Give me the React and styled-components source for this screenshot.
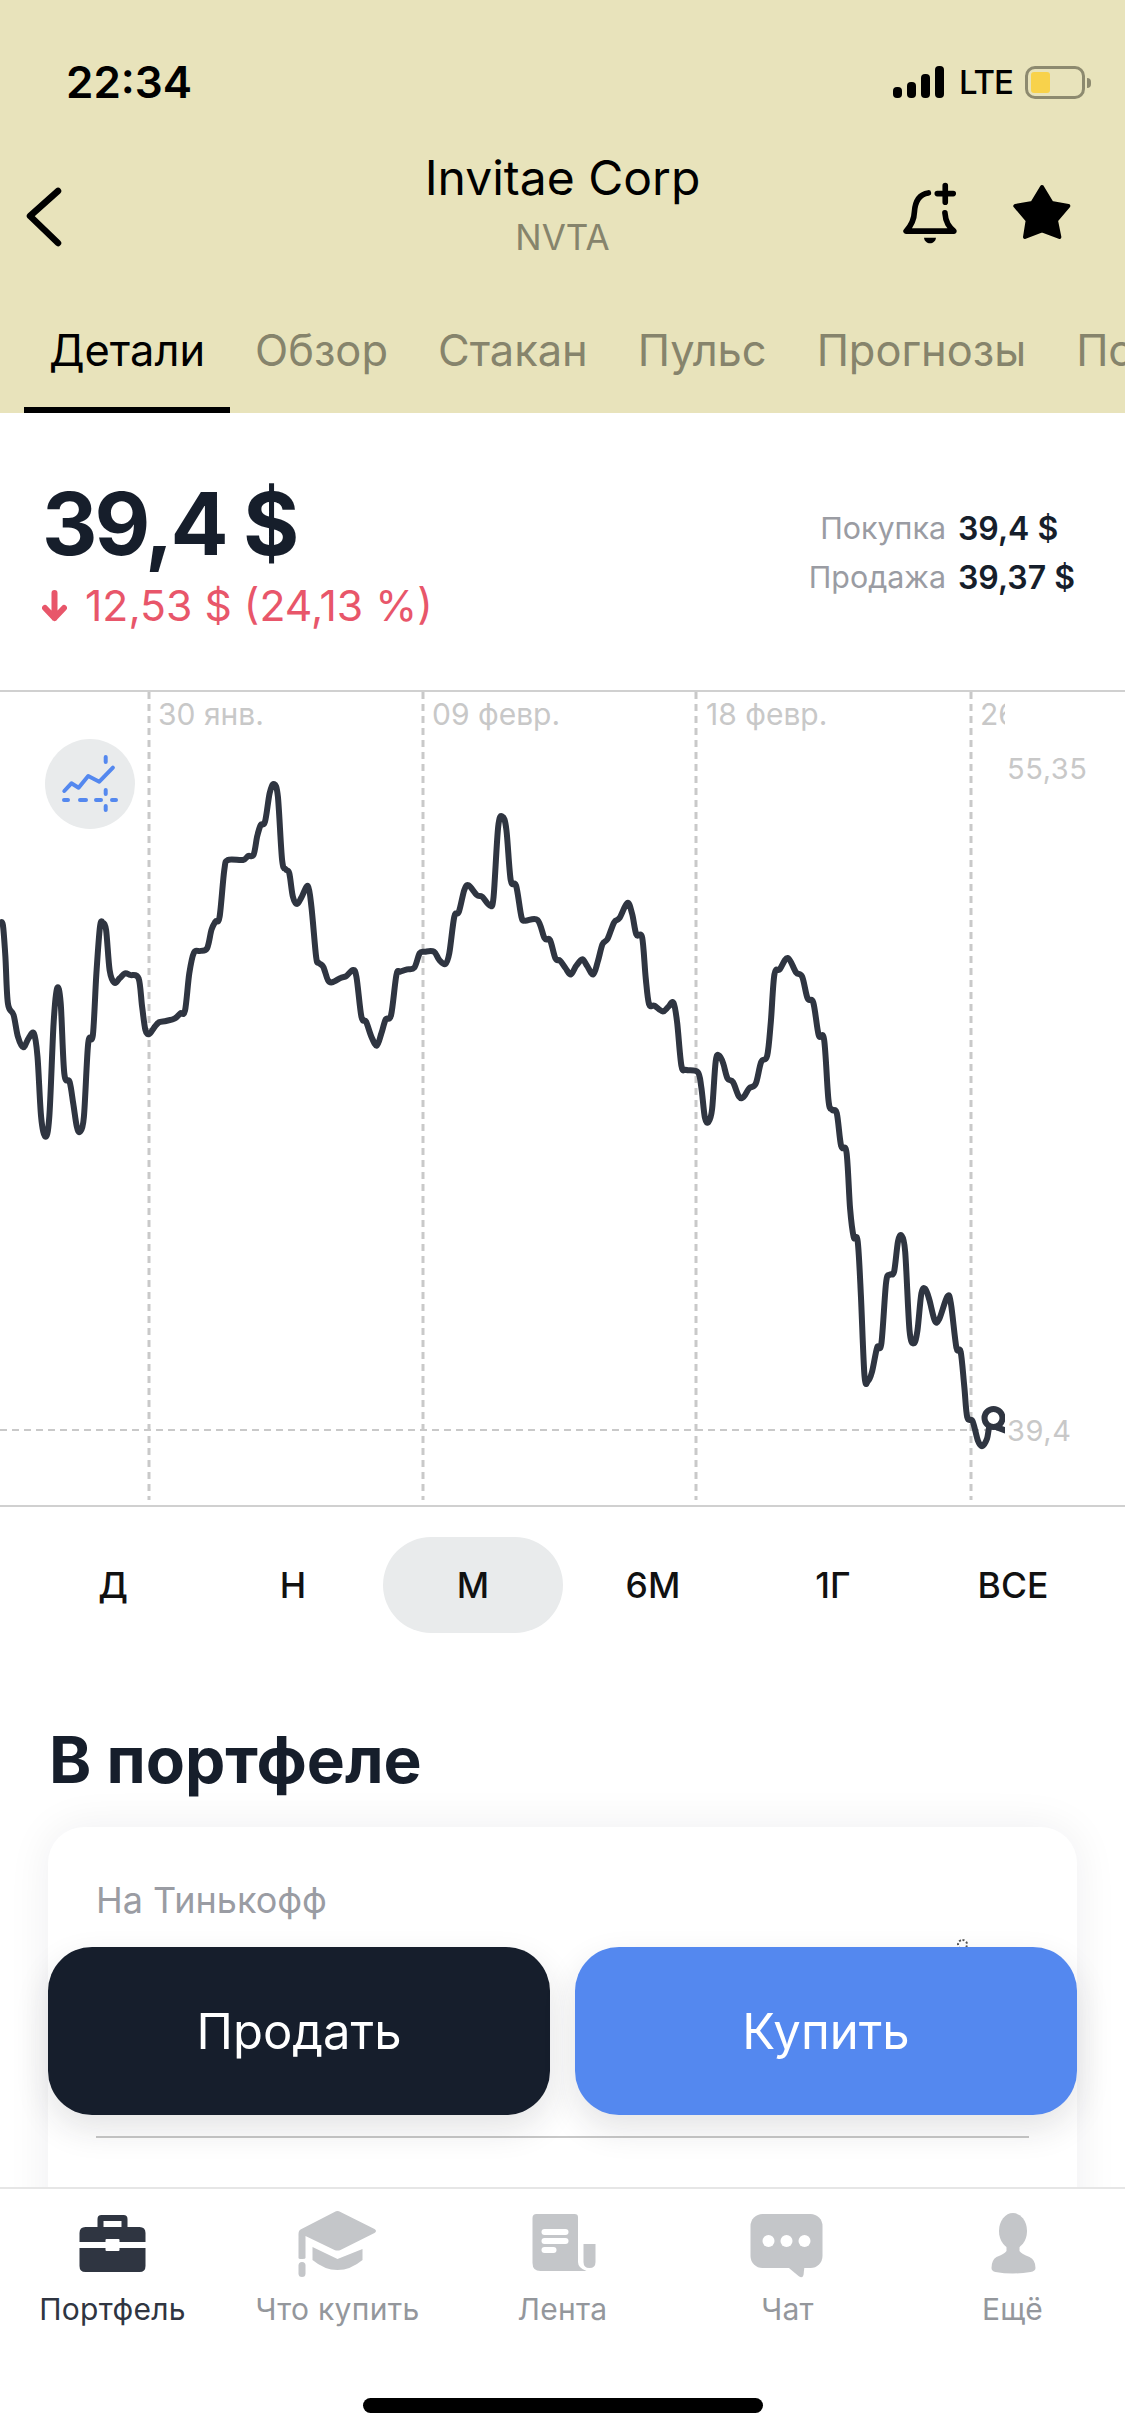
import React from "react";
import styled, { createGlobalStyle } from "styled-components";

const FONT = `Inter, "Noto Sans", "Liberation Sans", sans-serif`;
const INK = "#161e2b";
const SLATE = "#2f3541";
const MUTED = "#9a9ca3";
const ICON_GREY = "#c4c6c9";
const BLUE = "#5488ef";

const GlobalStyle = createGlobalStyle`
  html, body { margin: 0; padding: 0; background: #fff; }
  body { font-family: ${FONT}; }
`;

// traced from zoomed crops of the chart, crop coords -> page coords below
const LEFT_TRACE = [
  [0,550],[8,555],[15,650],[22,790],[38,825],[50,890],[65,922],[80,895],[95,880],[105,950],[115,1130],[127,1190],
  [138,1130],[150,850],[160,745],[170,790],[180,1000],[195,1025],[205,1090],[215,1160],[224,1175],[235,1130],
  [247,910],[260,885],[270,700],[280,560],[288,548],[297,570],[307,690],[320,728],[335,715],[350,700],[365,705],
  [388,715],[398,800],[407,870],[418,882],[432,862],[445,847],[465,843],[490,835],[505,820],[518,812],[530,700],
  [543,638],[560,633],[580,625],[592,570],[603,545],[615,530],[628,390],[638,360],[680,360],[695,348],[710,344],
  [720,290],[730,255],[742,245],[755,160],[767,132],[778,170],[790,360],[800,388],[810,400],[820,470],[832,492],
  [845,470],[862,438],[872,500],[885,650],[892,668],[905,680],[918,720],[930,727],[955,713],[970,708],[988,690],
  [998,710],[1012,830],[1025,845],[1040,890],[1055,917],[1068,880],[1080,838],[1095,825],[1110,705],[1120,695],
  [1140,688],[1160,683],[1175,640],[1190,635],[1215,635],[1230,660],[1247,672],[1258,640],[1272,530],[1285,515],
  [1300,450],[1312,436],[1335,465],[1350,470],[1372,497],[1382,470],[1395,260],[1407,230],[1418,270],[1430,420],
  [1445,437],[1460,530],[1470,542],[1505,540],[1525,595],[1540,600],[1555,655],
];
const RIGHT_TRACE = [
  [0,278],[15,295],[30,310],[45,290],[62,275],[75,290],[92,310],[105,280],[118,240],[132,228],[150,190],[165,180],
  [187,145],[200,170],[212,218],[228,225],[238,320],[247,378],[262,382],[285,395],[300,385],[315,375],[325,420],
  [337,520],[350,530],[382,535],[392,570],[402,640],[412,650],[422,620],[432,510],[442,497],[453,515],[465,550],
  [480,558],[497,592],[510,592],[525,572],[543,562],[558,512],[575,497],[585,420],[595,310],[610,298],[632,272],
  [655,305],[672,315],[687,365],[703,375],[718,450],[733,460],[745,600],[755,622],[768,630],[780,705],[795,720],
  [805,850],[815,915],[826,925],[835,1050],[845,1235],[855,1247],[866,1225],[880,1170],[892,1160],[905,1020],
  [915,1002],[927,995],[938,925],[948,912],[958,950],[970,1130],[982,1160],[992,1130],[1003,1045],[1014,1035],
  [1025,1060],[1040,1108],[1052,1105],[1075,1052],[1085,1070],[1100,1170],[1112,1180],[1122,1260],[1130,1330],
  [1145,1340],[1160,1385],[1172,1397],[1185,1380],[1192,1352],[1205,1352],[1240,1362],
];

const points = [
  ...LEFT_TRACE.map(([x, y]) => [x / 2.8, 740 + y / 3]),
  ...RIGHT_TRACE.map(([x, y]) => [560 + x / 2.775, 840 + y / 2.305]),
];

function smoothPath(pts) {
  let d = `M${pts[0][0].toFixed(1)} ${pts[0][1].toFixed(1)}`;
  for (let i = 0; i < pts.length - 1; i++) {
    const p0 = pts[i - 1] || pts[i];
    const p1 = pts[i];
    const p2 = pts[i + 1];
    const p3 = pts[i + 2] || p2;
    const c1x = p1[0] + (p2[0] - p0[0]) / 6;
    const c1y = p1[1] + (p2[1] - p0[1]) / 6;
    const c2x = p2[0] - (p3[0] - p1[0]) / 6;
    const c2y = p2[1] - (p3[1] - p1[1]) / 6;
    d += ` C${c1x.toFixed(1)} ${c1y.toFixed(1)} ${c2x.toFixed(1)} ${c2y.toFixed(1)} ${p2[0].toFixed(1)} ${p2[1].toFixed(1)}`;
  }
  return d;
}

const Screen = styled.div`
  position: relative;
  width: 1125px;
  height: 2436px;
  overflow: hidden;
  background: #fff;
  display: flex;
  flex-direction: column;
  color: ${INK};
`;

const Header = styled.header`
  background: #e8e3bb;
  height: 413px;
  flex: none;
  color: #000;
`;

const StatusBar = styled.div`
  height: 109px;
  padding: 55px 40px 0 66px;
  box-sizing: border-box;
  display: flex;
  justify-content: space-between;
`;

const Clock = styled.div`
  font-size: 44px;
  font-weight: 600;
  line-height: 54px;
`;

const StatusRight = styled.div`
  display: flex;
  align-items: center;
  height: 54px;
`;

const Lte = styled.span`
  font-size: 33px;
  font-weight: 500;
  line-height: 54px;
  letter-spacing: -1px;
  margin: 0 12px 0 14px;
`;

const Battery = styled.div`
  position: relative;
  width: 60px;
  height: 33px;
  box-sizing: border-box;
  border: 3px solid #8d8a6f;
  border-radius: 10px;
  padding: 3px;
  &::after {
    content: "";
    position: absolute;
    right: -9px;
    top: 9px;
    width: 4px;
    height: 10px;
    background: #8d8a6f;
    border-radius: 0 5px 5px 0;
  }
`;

const BatteryLevel = styled.div`
  width: 19px;
  height: 21px;
  background: #f8d24b;
  border-radius: 3px;
`;

const Nav = styled.div`
  margin-top: 40px;
  height: 111px;
  display: grid;
  grid-template-columns: 1fr auto 1fr;
`;

const BackButton = styled.div`
  padding: 38px 0 0 24px;
`;

const TitleBlock = styled.div`
  text-align: center;
`;

const Title = styled.div`
  font-size: 48px;
  font-weight: 400;
  line-height: 60px;
  margin-top: -1px;
`;

const Ticker = styled.div`
  margin-top: 7px;
  font-size: 35px;
  line-height: 44px;
  color: #86846c;
`;

const NavActions = styled.div`
  display: flex;
  justify-content: flex-end;
  gap: 51px;
  padding: 33px 52px 0 0;
`;

const Tabs = styled.nav`
  margin-top: 60px;
  padding-left: 24px;
  display: flex;
  overflow: hidden;
`;

const Tab = styled.div`
  flex: none;
  padding: 0 25px 27px;
  font-size: 43.4px;
  line-height: 60px;
  color: ${(p) => (p.$active ? "#000" : "#86846c")};
  border-bottom: 6px solid ${(p) => (p.$active ? "#000" : "transparent")};
`;

const Quote = styled.section`
  height: 277px;
  flex: none;
  box-sizing: border-box;
  padding: 61px 50px 0 42px;
  display: flex;
  justify-content: space-between;
`;

const Price = styled.div`
  font-size: 86px;
  font-weight: 700;
  line-height: 100px;
  letter-spacing: -3px;
`;

const Change = styled.div`
  margin-top: 7px;
  display: flex;
  align-items: center;
  gap: 18px;
  font-size: 42.7px;
  line-height: 50px;
  color: #e8566a;
`;

const Bid = styled.div`
  margin-top: 30px;
  display: grid;
  grid-template-columns: auto auto;
  column-gap: 12px;
  align-content: start;
  line-height: 49px;
`;

const BidLabel = styled.span`
  font-size: 30.4px;
  color: ${MUTED};
  text-align: right;
`;

const BidValue = styled.span`
  font-size: 32px;
  font-weight: 600;
  color: ${INK};
`;

const ChartArea = styled.section`
  position: relative;
  height: 817px;
  flex: none;
  box-sizing: border-box;
  border-top: 2px solid #d0d0d0;
  border-bottom: 2px solid #d0d0d0;
`;

const ChartSvg = styled.svg`
  display: block;
  width: 1125px;
  height: 813px;
`;

const IndicatorButton = styled.div`
  position: absolute;
  left: 45px;
  top: 47px;
  width: 90px;
  height: 90px;
  border-radius: 50%;
  background: #e9ebec;
`;

const Periods = styled.div`
  flex: none;
  padding: 30px 23px 0;
  display: grid;
  grid-template-columns: repeat(6, 180px);
`;

const Period = styled.div`
  height: 96px;
  border-radius: 48px;
  display: flex;
  align-items: center;
  justify-content: center;
  font-size: 35.5px;
  font-weight: 500;
  color: #111;
  background: ${(p) => (p.$active ? "#e9ebec" : "transparent")};
`;

const Portfolio = styled.section`
  flex: 1;
  min-height: 0;
  padding: 91px 48px 0;
  overflow: hidden;
`;

const Heading = styled.h2`
  margin: 0 0 31px 1px;
  font-size: 64px;
  font-weight: 700;
  line-height: 72px;
  color: ${INK};
`;

const Card = styled.div`
  position: relative;
  height: 520px;
  border-radius: 36px;
  background: #fff;
  padding: 50px 48px 0;
  box-shadow: 0 0 44px rgba(30, 35, 45, 0.07);
`;

const CardLabel = styled.div`
  font-size: 36px;
  line-height: 46px;
  color: ${MUTED};
`;

const Peek = styled.span`
  position: absolute;
  left: 909px;
  top: 112px;
  width: 7px;
  height: 7px;
  border: 2px dotted #555;
  border-radius: 50%;
`;

const Divider = styled.div`
  margin-top: 213px;
  height: 2px;
  background: #c8c8c8;
`;

const Actions = styled.div`
  position: absolute;
  left: 48px;
  right: 48px;
  top: 1947px;
  display: grid;
  grid-template-columns: 1fr 1fr;
  gap: 25px;
`;

const ActionButton = styled.div`
  height: 168px;
  border-radius: 44px;
  display: flex;
  align-items: center;
  justify-content: center;
  font-size: 49px;
  color: #fff;
  background: ${(p) => p.$bg};
  box-shadow: 0 14px 34px rgba(30, 35, 45, 0.12);
`;

const BottomBar = styled.footer`
  flex: none;
  position: relative;
  background: #fff;
  border-top: 2px solid #e6e6e6;
  padding-top: 21px;
`;

const BarItems = styled.div`
  display: grid;
  grid-template-columns: repeat(5, 225px);
`;

const BarItem = styled.div`
  display: flex;
  flex-direction: column;
  align-items: center;
  color: ${(p) => (p.$active ? SLATE : "#94979c")};
`;

const BarIcon = styled.svg`
  display: block;
  width: 120px;
  height: 70px;
`;

const BarLabel = styled.span`
  margin-top: 11px;
  font-size: 30px;
  line-height: 36px;
  letter-spacing: 0.3px;
  white-space: nowrap;
`;

const HomeIndicator = styled.div`
  width: 400px;
  height: 15px;
  margin: 71px auto 23px;
  background: #000;
  border-radius: 8px;
`;

const TABS = ["Детали", "Обзор", "Стакан", "Пульс", "Прогнозы", "Портфель"];
const PERIODS = ["Д", "Н", "М", "6М", "1Г", "ВСЕ"];
const GRID_X = [149, 423, 696, 971];
const DATES = [
  ["30 янв.", 158],
  ["09 февр.", 432],
  ["18 февр.", 706],
  ["26 февр.", 980],
];

const barBox = (cx) => `${cx - 60} 2210 120 70`;

function Chart() {
  return (
    <ChartSvg viewBox="0 692 1125 813">
      <defs>
        <clipPath id="plot">
          <rect x="0" y="690" width="1005" height="816" />
        </clipPath>
      </defs>
      <g stroke="#c9c9c9" strokeWidth="3" strokeDasharray="7 5">
        {GRID_X.map((x) => (
          <line key={x} x1={x} y1="692" x2={x} y2="1500" />
        ))}
      </g>
      <line x1="0" y1="1430" x2="1005" y2="1430" stroke="#c9c9c9" strokeWidth="2" strokeDasharray="7 5" />
      <g clipPath="url(#plot)" fill="#c8c8c8" fontSize="30" fontFamily={FONT}>
        {DATES.map(([label, x]) => (
          <text key={label} x={x} y="725">{label}</text>
        ))}
      </g>
      <g fill="#c8c8c8" fontSize="29" fontFamily={FONT} letterSpacing="0.6">
        <text x="1007" y="779">55,35</text>
        <text x="1007" y="1441">39,4</text>
      </g>
      <g clipPath="url(#plot)">
        <path d={smoothPath(points)} fill="none" stroke={SLATE} strokeWidth="6" strokeLinejoin="round" strokeLinecap="round" />
        <circle cx="993.5" cy="1418" r="9" fill="#fff" stroke={SLATE} strokeWidth="6" />
      </g>
    </ChartSvg>
  );
}

export default function App() {
  return (
    <Screen>
      <GlobalStyle />
      <Header>
        <StatusBar>
          <Clock>22:34</Clock>
          <StatusRight>
            <svg width="52" height="34" viewBox="0 0 52 34" fill="#000">
              <rect x="0" y="22" width="9" height="11" rx="4" />
              <rect x="14" y="17" width="9" height="16" rx="4" />
              <rect x="28" y="9" width="9" height="24" rx="4" />
              <rect x="42" y="1" width="9" height="32" rx="4" />
            </svg>
            <Lte>LTE</Lte>
            <Battery>
              <BatteryLevel />
            </Battery>
          </StatusRight>
        </StatusBar>
        <Nav>
          <BackButton>
            <svg width="42" height="62" viewBox="0 0 42 62" fill="none" stroke="#000" strokeWidth="6.5" strokeLinecap="round" strokeLinejoin="round">
              <polyline points="34,4 6,29 34,56" />
            </svg>
          </BackButton>
          <TitleBlock>
            <Title>Invitae Corp</Title>
            <Ticker>NVTA</Ticker>
          </TitleBlock>
          <NavActions>
            <svg width="60" height="63" viewBox="120 395 180 190" fill="none" stroke="#000" strokeWidth="17" strokeLinecap="round">
              <path d="M205 428 C178 432 165 455 163 485 C162 515 150 530 138 543 H282 C268 530 257 518 255 488" strokeLinejoin="round" />
              <path d="M232 430 H280 M256 406 V456" />
              <path d="M192 563 H228 C226 585 194 585 192 563 Z" fill="#000" stroke="none" />
            </svg>
            <svg width="62" height="62" viewBox="450 400 186 186" fill="#000" stroke="#000" strokeWidth="12" strokeLinejoin="round">
              <polygon points="543,415 572,463 622,472 585,515 595,565 543,545 492,565 500,515 463,472 514,463" />
            </svg>
          </NavActions>
        </Nav>
        <Tabs>
          {TABS.map((t, i) => (
            <Tab key={t} $active={i === 0}>{t}</Tab>
          ))}
        </Tabs>
      </Header>

      <Quote>
        <div>
          <Price>39,4 $</Price>
          <Change>
            <svg width="25" height="32" viewBox="0 0 25 32" fill="none" stroke="#e8566a" strokeWidth="6" strokeLinecap="round" strokeLinejoin="round">
              <path d="M12.5 3 V28 M3 18 L12.5 28 L22 18" />
            </svg>
            12,53 $ (24,13 %)
          </Change>
        </div>
        <Bid>
          <BidLabel>Покупка</BidLabel>
          <BidValue>39,4 $</BidValue>
          <BidLabel>Продажа</BidLabel>
          <BidValue>39,37 $</BidValue>
        </Bid>
      </Quote>

      <ChartArea>
        <Chart />
        <IndicatorButton>
          <svg width="90" height="90" viewBox="45 738 90 90" fill="none" stroke={BLUE} strokeWidth="4" strokeLinecap="round" strokeLinejoin="round">
            <polyline points="64.3,790 71.4,782.3 78.6,786.7 88.2,775 99.3,780.7 112.9,766.7" />
            <path d="M64 799 H68 M80 799 H86 M96 799 H101 M112 799 H116" />
            <path d="M105.7 756 V761 M105.7 789 V793 M105.7 805 V809" />
          </svg>
        </IndicatorButton>
      </ChartArea>

      <Periods>
        {PERIODS.map((p, i) => (
          <Period key={p} $active={i === 2}>{p}</Period>
        ))}
      </Periods>

      <Portfolio>
        <Heading>В портфеле</Heading>
        <Card>
          <CardLabel>На Тинькофф</CardLabel>
          <Peek />
          <Divider />
        </Card>
      </Portfolio>

      <Actions>
        <ActionButton $bg="#161e2c">Продать</ActionButton>
        <ActionButton $bg={BLUE}>Купить</ActionButton>
      </Actions>

      <BottomBar>
        <BarItems>
          <BarItem $active>
            <BarIcon viewBox={barBox(112.5)}>
              <path fill={SLATE} fillRule="evenodd" d="M101 2215 H123 Q127 2215 127 2219 V2227 H139 Q145 2227 145 2233 V2242 H119 V2240 Q119 2239 118 2239 H106 Q105 2239 105 2240 V2242 H79 V2233 Q79 2227 85 2227 H97 V2219 Q97 2215 101 2215 Z M103 2221 V2227 H121 V2221 Z" />
              <path fill={SLATE} d="M79 2248 H105 V2250 Q105 2251 106 2251 H118 Q119 2251 119 2250 V2248 H145 V2266 Q145 2272 139 2272 H85 Q79 2272 79 2266 Z" />
            </BarIcon>
            <BarLabel>Портфель</BarLabel>
          </BarItem>
          <BarItem>
            <BarIcon viewBox={barBox(337.5)}>
              <path fill={ICON_GREY} d="M334 2212 Q337 2210 340 2212 L374 2229 Q377 2231 374 2233 L340 2250 Q337 2251 334 2250 L305 2236 V2258 Q305 2259 302 2259 H300 Q298 2259 298 2258 V2234 Q298 2230 301 2229 Z" />
              <path fill={ICON_GREY} d="M312 2247 L337 2259 L362 2249 V2260 Q350 2270 337 2270 Q324 2270 312 2260 Z" />
              <rect x="298" y="2262" width="7" height="15" rx="3.5" fill={ICON_GREY} />
            </BarIcon>
            <BarLabel>Что купить</BarLabel>
          </BarItem>
          <BarItem>
            <BarIcon viewBox={barBox(562.5)}>
              <path fill={ICON_GREY} d="M536 2214 H574 Q577.5 2214 577.5 2217 V2262 Q577.5 2268 586 2271 H540 Q532 2271 532 2263 V2218 Q532 2214 536 2214 Z" />
              <path fill={ICON_GREY} d="M583 2244 H595 V2262 Q595 2268 589 2268 Q583 2268 583 2262 Z" />
              <g fill="#fff">
                <rect x="541" y="2229" width="27" height="6" rx="3" />
                <rect x="541" y="2238" width="27" height="6" rx="3" />
                <rect x="541" y="2247" width="15" height="6" rx="3" />
              </g>
            </BarIcon>
            <BarLabel>Лента</BarLabel>
          </BarItem>
          <BarItem>
            <BarIcon viewBox={barBox(787.5)}>
              <rect x="750" y="2214" width="72" height="54" rx="12" fill={ICON_GREY} />
              <path fill={ICON_GREY} d="M786 2266 L798 2276 Q802 2279 803 2275 L804 2266 Z" />
              <g fill="#fff">
                <circle cx="768" cy="2241" r="6" />
                <circle cx="786" cy="2241" r="6" />
                <circle cx="804" cy="2241" r="6" />
              </g>
            </BarIcon>
            <BarLabel>Чат</BarLabel>
          </BarItem>
          <BarItem>
            <BarIcon viewBox={barBox(1012.5)}>
              <ellipse cx="1012.5" cy="2231" rx="14" ry="18" fill={ICON_GREY} />
              <path fill={ICON_GREY} d="M1006 2243 H1019 V2251 Q1021 2254 1029 2257 Q1035 2260 1035 2268 Q1035 2271 1030 2272 Q1012 2275 995 2272 Q991 2271 991 2268 Q991 2260 996 2257 Q1004 2254 1006 2251 Z" />
            </BarIcon>
            <BarLabel>Ещё</BarLabel>
          </BarItem>
        </BarItems>
        <HomeIndicator />
      </BottomBar>
    </Screen>
  );
}
